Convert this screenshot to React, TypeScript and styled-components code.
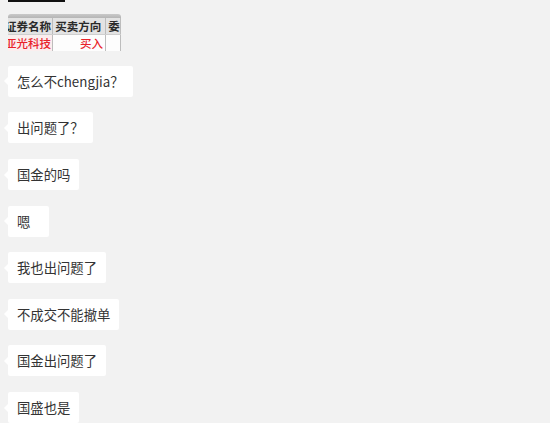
import React from 'react';
import styled, { createGlobalStyle } from 'styled-components';

const Global = createGlobalStyle`
  html, body {
    margin: 0;
    padding: 0;
    background: #f2f2f2;
  }
  body {
    font-family: "Noto Sans CJK SC", "Microsoft YaHei", sans-serif;
  }
`

const Page = styled.div`
  width: 550px;
  height: 423px;
  overflow: hidden;
  padding-left: 8px;
  box-sizing: border-box;
  display: flex;
  flex-direction: column;
`

const TopBar = styled.div`
  width: 57px;
  height: 2px;
  background: #111;
`

const Shot = styled.div`
  margin-top: 12px;
  width: 113px;
  height: 39px;
  overflow: hidden;
  border-radius: 3px 3px 0 0;
  background: #fafafa;
  display: flex;
  flex-direction: column;
`

const ShotTitle = styled.div`
  height: 6px;
  background: linear-gradient(#c9c9c9, #b5b5b5);
`

const ShotRow = styled.div<{ $head?: boolean }>`
  display: grid;
  grid-template-columns: 45px 53px 15px;
  height: ${p => (p.$head ? '17px' : '16px')};
  background: ${p => (p.$head ? '#e3e3e3' : '#fdfdfd')};
  border-bottom: ${p => (p.$head ? '1px solid #cfcfcf' : 'none')};
  box-sizing: border-box;
`

const ShotCell = styled.div<{ $red?: boolean; $right?: boolean; $tint?: boolean; $head?: boolean }>`
  overflow: hidden;
  white-space: nowrap;
  font-size: 11.5px;
  line-height: 16px;
  font-weight: ${p => (p.$head ? 600 : 500)};
  color: ${p => (p.$red ? '#e8232a' : '#2a2a2a')};
  background: ${p => (p.$tint ? '#fbeeee' : 'transparent')};
  text-align: ${p => (p.$right ? 'right' : 'left')};
  padding-right: ${p => (p.$right ? '2px' : '0')};
  border-right: 1px solid #bdbdbd;
  text-indent: ${p => (p.$right ? '0' : '-3px')};
`

const Messages = styled.div`
  margin-top: 14.5px;
  display: flex;
  flex-direction: column;
  align-items: flex-start;
  gap: 15.6px;
`

const Bubble = styled.div`
  position: relative;
  box-sizing: border-box;
  height: 31px;
  min-width: 41px;
  padding: 0 9px;
  background: #fff;
  border-radius: 2px;
  font-size: 13.33px;
  line-height: 31px;
  color: #333;
  white-space: nowrap;

  &::before {
    content: '';
    position: absolute;
    left: -4px;
    top: 50%;
    margin-top: -4px;
    border-top: 4px solid transparent;
    border-bottom: 4px solid transparent;
    border-right: 4px solid #fff;
  }
`

const msgs = [
  '怎么不chengjia？',
  '出问题了？',
  '国金的吗',
  '嗯',
  '我也出问题了',
  '不成交不能撤单',
  '国金出问题了',
  '国盛也是',
]

export default function App() {
  return (
    <Page>
      <Global />
      <TopBar />
      <Shot>
        <ShotTitle />
        <ShotRow $head>
          <ShotCell $head>证券名称</ShotCell>
          <ShotCell $head>&nbsp;&nbsp;买卖方向</ShotCell>
          <ShotCell $head>&nbsp;&nbsp;委</ShotCell>
        </ShotRow>
        <ShotRow>
          <ShotCell $red $tint>亚光科技</ShotCell>
          <ShotCell $red $right>买入</ShotCell>
          <ShotCell />
        </ShotRow>
      </Shot>
      <Messages>
        {msgs.map((m, i) => (
          <Bubble key={i}>{m}</Bubble>
        ))}
      </Messages>
    </Page>
  );
}
